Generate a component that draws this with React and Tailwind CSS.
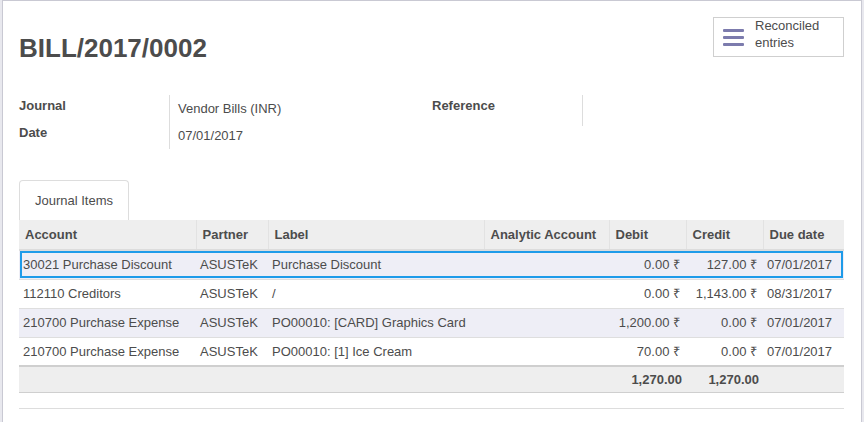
const rows = [
  { account: '30021 Purchase Discount', partner: 'ASUSTeK', label: 'Purchase Discount', debit: '0.00 ₹', credit: '127.00 ₹', due: '07/01/2017', selected: true },
  { account: '112110 Creditors', partner: 'ASUSTeK', label: '/', debit: '0.00 ₹', credit: '1,143.00 ₹', due: '08/31/2017' },
  { account: '210700 Purchase Expense', partner: 'ASUSTeK', label: 'PO00010: [CARD] Graphics Card', debit: '1,200.00 ₹', credit: '0.00 ₹', due: '07/01/2017' },
  { account: '210700 Purchase Expense', partner: 'ASUSTeK', label: 'PO00010: [1] Ice Cream', debit: '70.00 ₹', credit: '0.00 ₹', due: '07/01/2017' },
]

const cols = [
  { name: 'Account', w: 'w-[177px]' },
  { name: 'Partner', w: 'w-[72px]' },
  { name: 'Label', w: 'w-[216px]' },
  { name: 'Analytic Account', w: 'w-[125px]' },
  { name: 'Debit', w: 'w-[77px]' },
  { name: 'Credit', w: 'w-[77px]' },
  { name: 'Due date', w: 'w-[81px]' },
]

function MenuIcon() {
  return (
    <svg width="21" height="17" viewBox="0 0 21 17" className="shrink-0">
      <rect x="0" y="0" width="21" height="3" rx="1" fill="#7c7bad" />
      <rect x="0" y="7" width="21" height="3" rx="1" fill="#7c7bad" />
      <rect x="0" y="14" width="21" height="3" rx="1" fill="#7c7bad" />
    </svg>
  )
}

export default function App() {
  return (
    <div className="w-[864px] h-[422px] overflow-hidden bg-[#e8e8ee] pl-[2px] pr-[2px] font-['Liberation_Sans',Arial,sans-serif] text-[13px] text-[#4c4c4c]">
      <div className="h-full bg-white border-l border-t border-r border-[#c9c9d3] pl-4 pr-[17px]">

        {/* header */}
        <div className="flex justify-between">
          <h1 className="pt-[32px] text-[26px] leading-[30px] font-bold text-[#4c4c4c]">BILL/2017/0002</h1>
          <button className="mt-[16px] w-[131px] h-[40px] border border-[#cfcfcf] flex items-center gap-[11px] pl-[9px] text-left leading-[17px]">
            <MenuIcon />
            <span className="-mt-[7px]">Reconciled<br />entries</span>
          </button>
        </div>

        {/* fields */}
        <div className="flex mt-[32px]">
          <div className="flex w-[413px]">
            <div className="w-[150px] font-bold leading-[27px] -mt-[3px]">
              <div>Journal</div>
              <div>Date</div>
            </div>
            <div className="border-l border-[#ddd] pl-2 h-[54px] leading-[27px]">
              <div>Vendor Bills (INR)</div>
              <div>07/01/2017</div>
            </div>
          </div>
          <div className="flex">
            <div className="w-[150px] font-bold leading-[27px] -mt-[3px]">Reference</div>
            <div className="border-l border-[#ddd] h-[31px]" />
          </div>
        </div>

        {/* tab */}
        <div className="mt-[31px] flex">
          <div className="w-[110px] h-[40px] border border-b-0 border-[#ddd] rounded-t-[4px] flex items-center justify-center">
            Journal Items
          </div>
        </div>

        {/* table */}
        <table className="w-[825px] border-collapse table-fixed">
          <thead>
            <tr className="bg-[#eeeeee] h-[30px] border-b-2 border-[#dcdcdc]">
              {cols.map((c, i) => (
                <th key={c.name} className={`${c.w} px-[6px] text-left font-bold ${i > 0 ? 'border-l border-[#e2e2e2]' : ''}`}>
                  {c.name}
                </th>
              ))}
            </tr>
          </thead>
          <tbody>
            {rows.map((r, i) => (
              <tr
                key={i}
                className={`h-[29px] ${i % 2 === 0 ? 'bg-[#eeeef6]' : 'bg-white'} ${r.selected ? 'outline-2 outline-[#1e9be9] -outline-offset-3' : 'border-t border-[#dedede]'}`}
              >
                <td className="px-[4px] whitespace-nowrap">{r.account}</td>
                <td className="px-[4px] whitespace-nowrap">{r.partner}</td>
                <td className="px-[4px] whitespace-nowrap">{r.label}</td>
                <td className="px-[4px]"></td>
                <td className="pr-[6px] text-right whitespace-nowrap">{r.debit}</td>
                <td className="pr-[6px] text-right whitespace-nowrap">{r.credit}</td>
                <td className="pl-[4px] whitespace-nowrap">{r.due}</td>
              </tr>
            ))}
          </tbody>
          <tfoot>
            <tr className="h-[26px] bg-[#eeeeee] border-t-2 border-b border-[#cfcfcf] font-bold">
              <td></td>
              <td></td>
              <td></td>
              <td></td>
              <td className="pr-[4px] text-right">1,270.00</td>
              <td className="pr-[4px] text-right">1,270.00</td>
              <td></td>
            </tr>
          </tfoot>
        </table>
        <div className="mt-[15px] border-t border-[#dddddd] w-[825px]" />
      </div>
    </div>
  )
}
